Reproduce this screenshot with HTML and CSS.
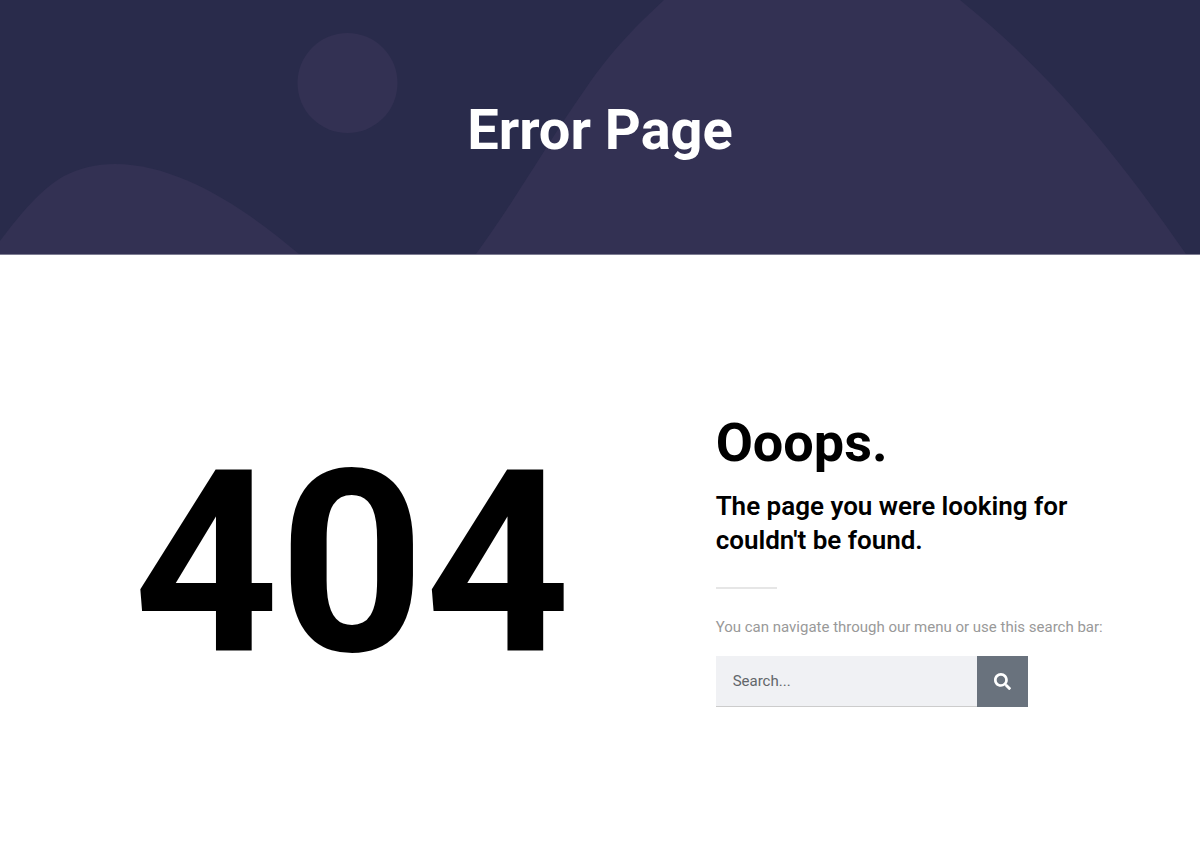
FILE: index.html
```html
<!DOCTYPE html>
<html lang="en">
<head>
    <meta charset="UTF-8">
    <meta name="viewport" content="width=device-width, initial-scale=1.0">
    <title>Error Page</title>
    <link rel="stylesheet" href="styles.css">
</head>
<body>
    <header class="page-header">
        <svg class="header-shapes" viewBox="0 0 1200 254" preserveAspectRatio="xMidYMin slice" aria-hidden="true">
            <circle cx="347.5" cy="83" r="50"/>
            <path d="M0 241 C20 214 42 188 64 176 C80 168 96 164 115 164 C180 164 247 210 299 254 H0 Z"/>
            <path d="M476 254 C513 204 548 142 586 88 C612 50 637 25 664 0 H960 C1055 76 1125 166 1186 254 Z"/>
        </svg>
        <h1 class="page-title">Error Page</h1>
    </header>
    <main class="error-content">
        <div class="error-code">404</div>
        <div class="error-message">
            <h2 class="error-title">Ooops.</h2>
            <h3 class="error-subtitle">The page you were looking for couldn't be found.</h3>
            <hr class="divider">
            <label class="search-label" for="search">You can navigate through our menu or use this search bar:</label>
            <form class="search-form" role="search">
                <input type="search" id="search" name="s" placeholder="Search...">
                <button type="submit" aria-label="Search">
                    <svg viewBox="0 0 512 512" aria-hidden="true">
                        <path d="M505 442.700L405.300 343c-4.500-4.500-10.600-7-17-7H372c27.600-35.300 44-79.700 44-128C416 93.100 322.900 0 208 0S0 93.100 0 208s93.100 208 208 208c48.300 0 92.700-16.400 128-44v16.300c0 6.400 2.500 12.500 7 17l99.700 99.700c9.400 9.400 24.600 9.400 33.900 0l28.300-28.300c9.400-9.400 9.400-24.600.1-34zM208 336c-70.700 0-128-57.200-128-128 0-70.700 57.200-128 128-128 70.700 0 128 57.200 128 128 0 70.700-57.200 128-128 128z"/>
                    </svg>
                </button>
            </form>
        </div>
    </main>
</body>
</html>
```
FILE: styles.css
```css
* {
    box-sizing: border-box;
}

body {
    margin: 0;
    background: #ffffff;
    color: #000000;
    font-family: Roboto, "Liberation Sans", sans-serif;
}

h1, h2, h3 {
    margin: 0;
}

/* Page Header */
.page-header {
    position: relative;
    overflow: hidden;
    padding: 98px 20px 92px;
    border-bottom: 1px solid #7d7c92;
    background: #292b4b;
    text-align: center;
}

.header-shapes {
    position: absolute;
    top: 0;
    left: 0;
    width: 100%;
    height: 100%;
    fill: #333153;
}

.page-title {
    position: relative;
    color: #ffffff;
    font-size: 56px;
    font-weight: 700;
    line-height: 64px;
}

/* Error Content */
.error-content {
    display: grid;
    grid-template-columns: 17fr 12fr;
    column-gap: 42px;
    max-width: 1140px;
    margin: 0 auto;
    padding: 156px 0 140px;
}

.error-code {
    padding-top: 26px;
    font-size: 254px;
    font-weight: 700;
    line-height: 254px;
    text-align: center;
}

.error-title {
    margin-bottom: 14px;
    font-size: 54px;
    font-weight: 700;
    line-height: 64px;
}

.error-subtitle {
    max-width: 400px;
    font-size: 26px;
    font-weight: 600;
    line-height: 34px;
}

.divider {
    width: 61px;
    margin: 30px 0 26px;
    border: 0;
    border-top: 2px solid #e6e6e6;
}

.search-label {
    display: block;
    margin-bottom: 17px;
    color: #999999;
    font-size: 15px;
    line-height: 24px;
}

/* Search Form */
.search-form {
    display: flex;
    max-width: 312px;
}

.search-form input {
    flex: 1;
    min-width: 0;
    height: 51px;
    padding: 0 17px;
    border: 0;
    border-bottom: 1px solid #cccccc;
    border-radius: 0;
    background: #f0f1f4;
    color: #55595c;
    font-family: inherit;
    font-size: 15px;
    appearance: none;
}

.search-form input::placeholder {
    color: #62666a;
    opacity: 1;
}

.search-form button {
    display: flex;
    justify-content: center;
    align-items: center;
    width: 51px;
    padding: 0;
    border: 0;
    background: #69727d;
    cursor: pointer;
}

.search-form svg {
    width: 17px;
    height: 17px;
    fill: #ffffff;
}
```
